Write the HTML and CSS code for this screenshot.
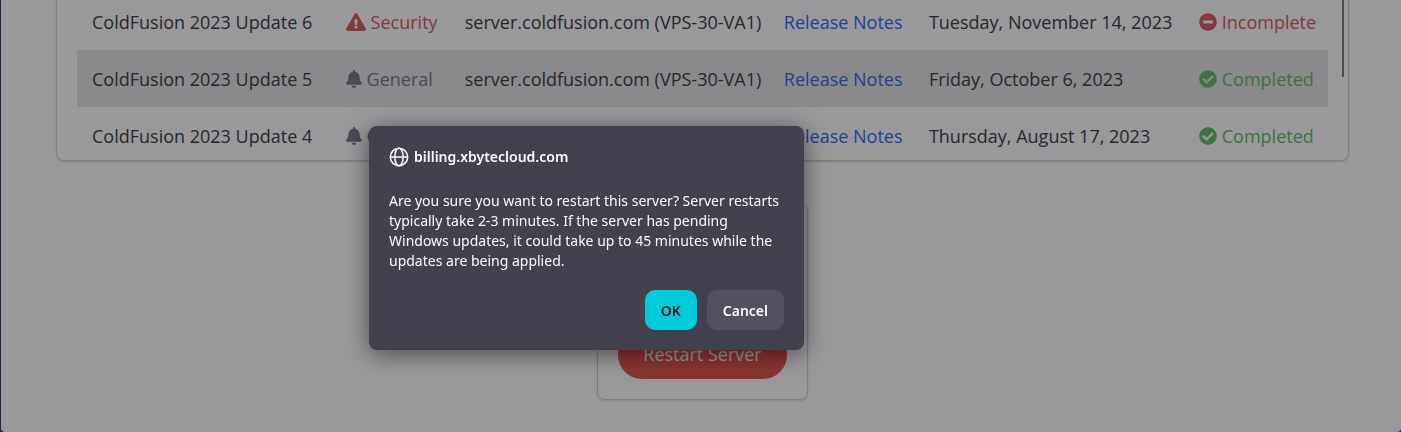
FILE: index.html
```html
<!DOCTYPE html>
<html lang="en">

<head>
    <meta charset="UTF-8">
    <meta name="viewport" content="width=device-width, initial-scale=1.0">
    <title>Server Updates</title>
    <link rel="stylesheet" href="styles.css">
</head>

<body>
    <!-- shared icons -->
    <svg class="hide" aria-hidden="true">
        <symbol id="icon-warning" viewBox="0 0 576 512">
            <path fill-rule="evenodd" d="M569.5 440C588 472 564.800 512 527.900 512H48.100c-36.900 0-60-40.100-41.600-72L246.400 24c18.500-32 64.700-32 83.200 0l239.900 416zM288 354c-25.400 0-46 20.600-46 46s20.600 46 46 46 46-20.600 46-46-20.600-46-46-46zm-43.700-165.300l7.400 136c.3 6.400 5.600 11.300 12 11.300h48.500c6.400 0 11.600-5 12-11.300l7.400-136c.4-6.900-5.100-12.700-12-12.700h-63.400c-6.900 0-12.400 5.800-12 12.700z" />
        </symbol>
        <symbol id="icon-bell" viewBox="0 0 448 512">
            <path d="M224 512c35.300 0 64-28.700 64-64H160c0 35.300 28.600 64 64 64zm215.400-149.700c-19.300-20.800-55.500-52-55.500-154.300 0-77.700-54.500-139.900-128-155.200V32c0-17.700-14.300-32-32-32s-32 14.300-32 32v20.800C118.500 68.100 64 130.300 64 208c0 102.300-36.200 133.500-55.500 154.300-6 6.400-8.700 14.100-8.600 21.700.1 16.400 13 32 32.100 32h383.800c19.100 0 32-15.600 32.100-32 .1-7.600-2.600-15.300-8.500-21.700z" />
        </symbol>
        <symbol id="icon-check" viewBox="0 0 512 512">
            <path fill-rule="evenodd" d="M504 256c0 137-111 248-248 248S8 393 8 256 119 8 256 8s248 111 248 248zM227.300 387.300l184-184c6.200-6.200 6.200-16.400 0-22.600l-22.600-22.600c-6.200-6.200-16.400-6.200-22.600 0L216 308.100l-70.100-70.100c-6.200-6.200-16.400-6.200-22.600 0l-22.600 22.600c-6.200 6.200-6.200 16.400 0 22.600l104 104c6.200 6.300 16.400 6.300 22.600.1z" />
        </symbol>
        <symbol id="icon-minus" viewBox="0 0 512 512">
            <path fill-rule="evenodd" d="M256 8C119 8 8 119 8 256s111 248 248 248 248-111 248-248S393 8 256 8zM124 296c-6.600 0-12-5.400-12-12v-56c0-6.600 5.400-12 12-12h264c6.600 0 12 5.400 12 12v56c0 6.600-5.400 12-12 12H124z" />
        </symbol>
    </svg>

    <main class="page">
        <div class="card updates">
            <table class="updates-table">
                <colgroup>
                    <col class="col-name">
                    <col class="col-type">
                    <col class="col-server">
                    <col class="col-notes">
                    <col class="col-date">
                    <col class="col-status">
                </colgroup>
                <tbody>
                    <tr>
                        <td>ColdFusion 2023 Update 6</td>
                        <td class="danger"><svg class="icon icon-wide"><use href="#icon-warning" /></svg> Security</td>
                        <td>server.coldfusion.com (VPS-30-VA1)</td>
                        <td><a href="#">Release Notes</a></td>
                        <td>Tuesday, November 14, 2023</td>
                        <td class="danger"><svg class="icon"><use href="#icon-minus" /></svg> Incomplete</td>
                    </tr>
                    <tr>
                        <td>ColdFusion 2023 Update 5</td>
                        <td class="muted"><svg class="icon icon-narrow"><use href="#icon-bell" /></svg> General</td>
                        <td>server.coldfusion.com (VPS-30-VA1)</td>
                        <td><a href="#">Release Notes</a></td>
                        <td>Friday, October 6, 2023</td>
                        <td class="success"><svg class="icon"><use href="#icon-check" /></svg> Completed</td>
                    </tr>
                    <tr>
                        <td>ColdFusion 2023 Update 4</td>
                        <td class="muted"><svg class="icon icon-narrow"><use href="#icon-bell" /></svg> General</td>
                        <td>server.coldfusion.com (VPS-30-VA1)</td>
                        <td><a href="#">Release Notes</a></td>
                        <td>Thursday, August 17, 2023</td>
                        <td class="success"><svg class="icon"><use href="#icon-check" /></svg> Completed</td>
                    </tr>
                </tbody>
            </table>
            <div class="scroll-thumb"></div>
        </div>

        <div class="card actions">
            <button type="button" class="restart-btn">Restart Server</button>
        </div>
    </main>

    <div class="overlay"></div>

    <dialog class="confirm" open aria-labelledby="confirm-title">
        <h1 class="confirm-title" id="confirm-title">
            <svg class="globe" viewBox="0 0 20 20" fill="none" stroke="currentColor" stroke-width="1.500" aria-hidden="true">
                <circle cx="10" cy="10" r="8.700" />
                <ellipse cx="10" cy="10" rx="4.200" ry="8.700" />
                <path d="M1.300 10h17.400" />
            </svg>
            billing.xbytecloud.com
        </h1>
        <p class="confirm-text">Are you sure you want to restart this server? Server restarts typically take 2-3 minutes. If the server has pending Windows updates, it could take up to 45 minutes while the updates are being applied.</p>
        <form class="confirm-buttons" method="dialog">
            <button class="btn btn-ok">OK</button>
            <button class="btn btn-cancel">Cancel</button>
        </form>
    </dialog>
</body>

</html>
```
FILE: styles.css
```css
* {
    padding: 0;
    margin: 0;
    box-sizing: border-box;
}

body {
    background-color: #162f5a;
    color: #333;
    font-family: "Open Sans", "Noto Sans", sans-serif;
    font-size: 18px;
    line-height: 25px;
}

.hide {
    display: none;
}

.page {
    display: flex;
    flex-direction: column;
    align-items: center;
    gap: 42px;
    min-height: 100vh;
    margin-left: 1px;
    padding: 0 52px 32px 55px;
    background-color: #fff;
    border-radius: 0 0 4px 4px;
}

.card {
    border: 1px solid #ccc;
    border-radius: 8px;
    box-shadow: 0 1px 2px rgba(0, 0, 0, 0.15);
}

/* updates list */
.updates {
    position: relative;
    width: 100%;
    height: 161px;
    padding: 0 20px;
    border-top: none;
    border-radius: 0 0 8px 8px;
    overflow: hidden;
}

.updates-table {
    width: 100%;
    margin-top: -7px;
    table-layout: fixed;
    border-collapse: collapse;
}

.updates-table td {
    padding: 17px 0 15px 15px;
    white-space: nowrap;
}

.updates-table tr:nth-child(even) {
    background-color: #e4e4e4;
}

.col-name {
    width: 20.3%;
}

.col-type {
    width: 9.5%;
}

.col-server {
    width: 25.5%;
}

.col-notes {
    width: 11.6%;
}

.col-date {
    width: 21.6%;
}

.col-status {
    width: 11.5%;
}

.updates-table a {
    color: #2563eb;
    text-decoration: none;
}

.scroll-thumb {
    position: absolute;
    top: 0;
    right: 4px;
    width: 2px;
    height: 77px;
    background-color: #777;
}

.icon {
    width: 18px;
    height: 18px;
    vertical-align: -2px;
    fill: currentColor;
}

.icon-wide {
    width: 20px;
}

.icon-narrow {
    width: 16px;
}

.danger {
    color: #d9534f;
}

.muted {
    color: #6c757d;
}

.success {
    color: #5cb85c;
}

/* server actions */
.actions {
    display: flex;
    align-items: flex-end;
    min-height: 197px;
    padding: 20px;
}

.restart-btn {
    padding: 12px 25px;
    border: none;
    border-radius: 24px;
    background-color: #e74c3c;
    color: #fff;
    font: inherit;
}

.overlay {
    position: fixed;
    inset: 0;
    background-color: rgba(28, 27, 34, 0.45);
}

/* confirm box */
.confirm {
    position: absolute;
    top: 126px;
    left: 369px;
    width: 435px;
    padding: 21px 20px 20px;
    border: none;
    border-radius: 8px;
    background-color: #42414d;
    color: #fbfbfe;
    box-shadow: 0 4px 24px rgba(0, 0, 0, 0.5);
    font-family: "Noto Sans", "Open Sans", sans-serif;
    font-size: 14px;
    line-height: 20px;
}

.confirm-title {
    display: flex;
    align-items: center;
    gap: 5px;
    margin-bottom: 24px;
    font-size: 14px;
    font-weight: 600;
}

.globe {
    width: 20px;
    height: 20px;
}

.confirm-text {
    margin-bottom: 19px;
}

.confirm-buttons {
    display: flex;
    justify-content: flex-end;
    gap: 10px;
}

.btn {
    padding: 11px 16px 9px;
    border: none;
    border-radius: 10px;
    font: inherit;
    font-weight: 600;
}

.btn-ok {
    background-color: #00cadb;
    color: #15141a;
}

.btn-cancel {
    background-color: #52515e;
    color: #fbfbfe;
}
```
